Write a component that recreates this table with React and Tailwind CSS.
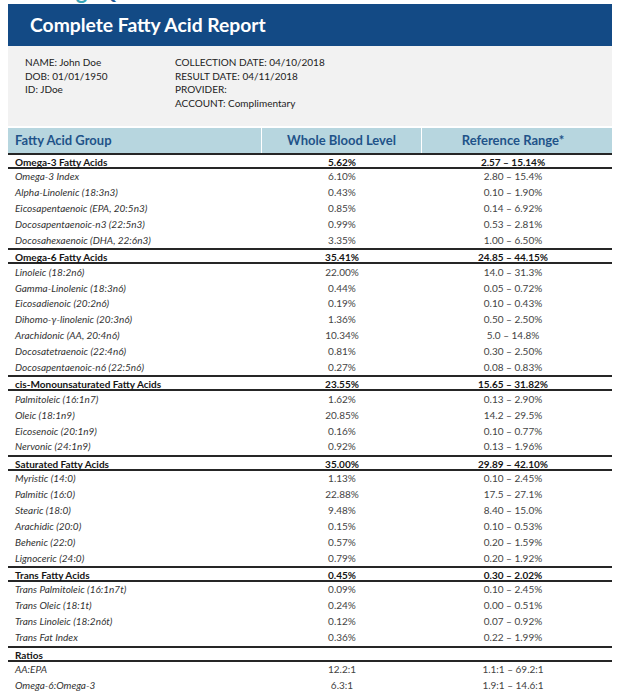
import React from "react";

const groups = [
  {
    name: "Omega-3 Fatty Acids",
    level: "5.62%",
    range: "2.57 – 15.14%",
    items: [
      ["Omega-3 Index", "6.10%", "2.80 – 15.4%"],
      ["Alpha-Linolenic (18:3n3)", "0.43%", "0.10 – 1.90%"],
      ["Eicosapentaenoic (EPA, 20:5n3)", "0.85%", "0.14 – 6.92%"],
      ["Docosapentaenoic-n3 (22:5n3)", "0.99%", "0.53 – 2.81%"],
      ["Docosahexaenoic (DHA, 22:6n3)", "3.35%", "1.00 – 6.50%"],
    ],
  },
  {
    name: "Omega-6 Fatty Acids",
    level: "35.41%",
    range: "24.85 – 44.15%",
    items: [
      ["Linoleic (18:2n6)", "22.00%", "14.0 – 31.3%"],
      ["Gamma-Linolenic (18:3n6)", "0.44%", "0.05 – 0.72%"],
      ["Eicosadienoic (20:2n6)", "0.19%", "0.10 – 0.43%"],
      ["Dihomo-γ-linolenic (20:3n6)", "1.36%", "0.50 – 2.50%"],
      ["Arachidonic (AA, 20:4n6)", "10.34%", "5.0 – 14.8%"],
      ["Docosatetraenoic (22:4n6)", "0.81%", "0.30 – 2.50%"],
      ["Docosapentaenoic-n6 (22:5n6)", "0.27%", "0.08 – 0.83%"],
    ],
  },
  {
    name: "cis-Monounsaturated Fatty Acids",
    level: "23.55%",
    range: "15.65 – 31.82%",
    items: [
      ["Palmitoleic (16:1n7)", "1.62%", "0.13 – 2.90%"],
      ["Oleic (18:1n9)", "20.85%", "14.2 – 29.5%"],
      ["Eicosenoic (20:1n9)", "0.16%", "0.10 – 0.77%"],
      ["Nervonic (24:1n9)", "0.92%", "0.13 – 1.96%"],
    ],
  },
  {
    name: "Saturated Fatty Acids",
    level: "35.00%",
    range: "29.89 – 42.10%",
    items: [
      ["Myristic (14:0)", "1.13%", "0.10 – 2.45%"],
      ["Palmitic (16:0)", "22.88%", "17.5 – 27.1%"],
      ["Stearic (18:0)", "9.48%", "8.40 – 15.0%"],
      ["Arachidic (20:0)", "0.15%", "0.10 – 0.53%"],
      ["Behenic (22:0)", "0.57%", "0.20 – 1.59%"],
      ["Lignoceric (24:0)", "0.79%", "0.20 – 1.92%"],
    ],
  },
  {
    name: "Trans Fatty Acids",
    level: "0.45%",
    range: "0.30 – 2.02%",
    items: [
      ["Trans Palmitoleic (16:1n7t)", "0.09%", "0.10 – 2.45%"],
      ["Trans Oleic (18:1t)", "0.24%", "0.00 – 0.51%"],
      ["Trans Linoleic (18:2n6t)", "0.12%", "0.07 – 0.92%"],
      ["Trans Fat Index", "0.36%", "0.22 – 1.99%"],
    ],
  },
  {
    name: "Ratios",
    level: "",
    range: "",
    items: [
      ["AA:EPA", "12.2:1", "1.1:1 – 69.2:1"],
      ["Omega-6:Omega-3", "6.3:1", "1.9:1 – 14.6:1"],
    ],
  },
];

function GroupRow({ g }) {
  return (
    <div className="grid grid-cols-[254px_160px_190px] h-[15.9px] items-center border-y-2 border-[#262626] text-[10px] font-bold text-[#151515]">
      <div className="pl-[7px]">{g.name}</div>
      <div className="text-center">{g.level}</div>
      <div className="text-center pr-[8px]">{g.range}</div>
    </div>
  );
}

function ItemRow({ item }) {
  return (
    <div className="grid grid-cols-[254px_160px_190px] h-[15.9px] items-center text-[10px] text-[#333]">
      <div className="pl-[7px] italic">{item[0]}</div>
      <div className="text-center text-[#444]">{item[1]}</div>
      <div className="text-center pr-[8px] text-[#444]">{item[2]}</div>
    </div>
  );
}

export default function App() {
  return (
    <div className="w-[631px] h-[693px] overflow-hidden bg-white font-['Lato',_sans-serif]">
      {/* logo above, cut by the page edge */}
      <div className="h-[4px] overflow-hidden pl-[28px]">
        <div className="-mt-[19px] text-[22px] font-bold leading-[20px]">
          <span className="text-[#3aa6b9]">Omega</span>
          <span className="text-[#1f5a96]">Quant</span>
        </div>
      </div>

      <div className="mx-[8px] w-[604px]">
        <div className="h-[42px] bg-[#134a85] flex items-center pl-[22px]">
          <h1 className="text-[19.3px] font-bold text-white">Complete Fatty Acid Report</h1>
        </div>

        <div className="h-[80px] bg-[#f2f2f2] pt-[10px] pl-[17px] flex text-[10px] leading-[13.7px] text-[#222]">
          <div className="w-[150px]">
            <div>NAME: John Doe</div>
            <div>DOB: 01/01/1950</div>
            <div>ID: JDoe</div>
          </div>
          <div>
            <div>COLLECTION DATE: 04/10/2018</div>
            <div>RESULT DATE: 04/11/2018</div>
            <div>PROVIDER:</div>
            <div>ACCOUNT: Complimentary</div>
          </div>
        </div>

        <div className="mt-[2px] h-[25px] bg-[#b7d6df] grid grid-cols-[254px_160px_190px] items-center text-[13px] font-bold text-[#1f5389]">
          <div className="pl-[7px] h-full flex items-center border-r border-white">Fatty Acid Group</div>
          <div className="text-center h-full flex items-center justify-center border-r border-white">Whole Blood Level</div>
          <div className="text-center pr-[8px]">Reference Range*</div>
        </div>

        {groups.map((g) => (
          <div key={g.name}>
            <GroupRow g={g} />
            {g.items.map((it) => (
              <ItemRow key={it[0]} item={it} />
            ))}
          </div>
        ))}
      </div>
    </div>
  );
}
